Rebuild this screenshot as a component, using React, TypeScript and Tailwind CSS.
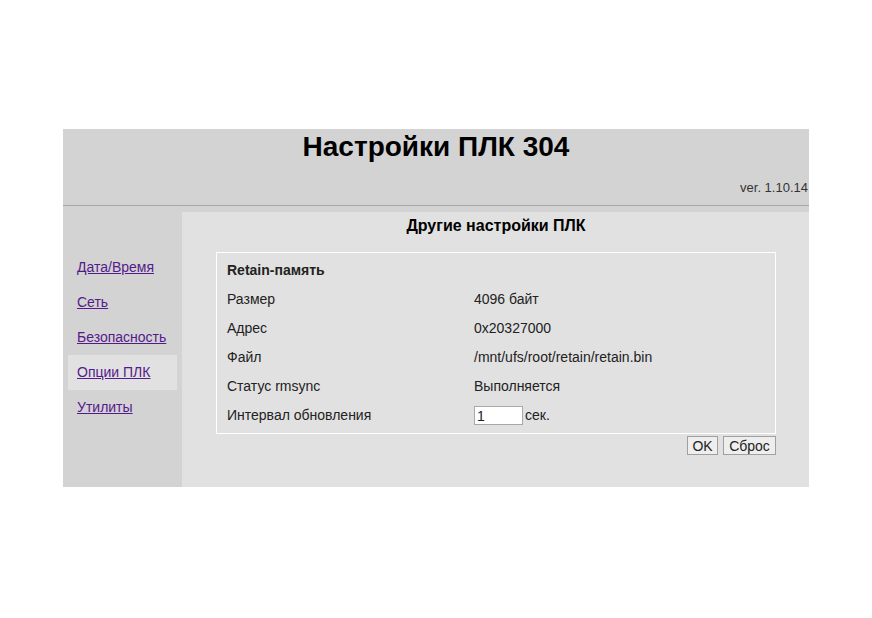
import React, { useState } from 'react';

const menu = ['Дата/Время', 'Сеть', 'Безопасность', 'Опции ПЛК', 'Утилиты'];

const rows: [string, string][] = [
  ['Размер', '4096 байт'],
  ['Адрес', '0x20327000'],
  ['Файл', '/mnt/ufs/root/retain/retain.bin'],
  ['Статус rmsync', 'Выполняется'],
];

export default function App() {
  const [active] = useState('Опции ПЛК');
  const [interval, setInterval] = useState('1');

  return (
    <div className="min-h-[618px] bg-white pl-[63px] pt-[129px] font-['Liberation_Sans',Arial,sans-serif] text-[#222]">
      <div className="w-[746px] bg-[#d3d3d3]">
        {/* header */}
        <div className="flex h-[76px] flex-col">
          <h1 className="pt-[2px] text-center text-[28px] font-bold leading-[32px] text-black">
            Настройки ПЛК 304
          </h1>
          <div className="mt-[17px] pr-[1px] text-right text-[13px] leading-4 text-[#333]">ver. 1.10.14</div>
        </div>
        <div className="h-px bg-[#a6a6a6]" />

        <div className="flex pt-[6px]">
          {/* side menu */}
          <div className="w-[119px] pl-[5px] pt-[38px]">
            {menu.map((item) => (
              <div
                key={item}
                className={`flex h-[35px] w-[109px] items-center pl-[9px] text-[14px] ${
                  item === active ? 'bg-[#e1e1e1]' : ''
                }`}
              >
                <a href="#" className="text-[#551a8b] underline">
                  {item}
                </a>
              </div>
            ))}
          </div>

          {/* page body */}
          <div className="h-[275px] flex-1 bg-[#e1e1e1] pl-[34px] pr-[33px] pt-[4px]">
            <h2 className="text-center text-[16px] font-bold leading-5 text-black">Другие настройки ПЛК</h2>
            <div className="mt-[16px] border border-white pb-[3px] pl-[10px] pt-[3px] text-[14px]">
              <div className="flex h-[29px] items-center font-bold">Retain-память</div>
              {rows.map(([label, value]) => (
                <div key={label} className="flex h-[29px] items-center">
                  <div className="w-[247px]">{label}</div>
                  <div>{value}</div>
                </div>
              ))}
              <div className="flex h-[29px] items-center">
                <div className="w-[247px]">Интервал обновления</div>
                <input
                  value={interval}
                  onChange={(e) => setInterval(e.target.value)}
                  className="h-[19px] w-[49px] border border-[#a9a9a9] bg-white px-[2px] text-[14px] leading-4 text-[#222] outline-none"
                />
                <span className="ml-[2px]">сек.</span>
              </div>
            </div>
            <div className="mt-[2px] flex justify-end gap-[5px]">
              <button className="h-[19px] w-[31px] border border-[#a0a0a0] bg-[#eeeeee] text-[14px] leading-4">OK</button>
              <button className="h-[19px] w-[53px] border border-[#a0a0a0] bg-[#eeeeee] text-[14px] leading-4">Сброс</button>
            </div>
          </div>
        </div>
      </div>
    </div>
  );
}
